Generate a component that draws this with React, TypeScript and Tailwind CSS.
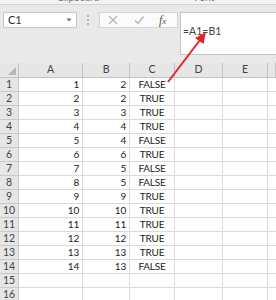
import React from "react";

const A = [1, 2, 3, 4, 5, 6, 7, 8, 9, 10, 11, 12, 13, 14];
const B = [2, 2, 3, 4, 4, 6, 5, 5, 9, 10, 11, 12, 13, 13];

export default function App() {
  const rows = Array.from({ length: 16 }, (_, i) => i);
  return (
    <div
      className="relative w-[276px] h-[300px] overflow-hidden bg-[#e9e9e9]"
      style={{ fontFamily: "Lato, 'Liberation Sans', sans-serif" }}
    >
      {/* ribbon bottom strip */}
      <div className="h-[5px] overflow-hidden bg-[#f3f3f3] border-b border-[#d4d4d4] flex text-[10px] leading-[10px] text-[#777]">
        <span className="ml-[57px] -mt-[8px]">Clipboard</span>
        <span className="ml-[95px] -mt-[8px]">Font</span>
      </div>

      {/* formula bar */}
      <div className="flex items-start pl-[3px] mt-[7px]">
        <div className="w-[74px] h-[16px] bg-white border border-[#c6c6c6] flex items-center justify-between px-[4px]">
          <span className="text-[11px] leading-[14px] text-[#333]">C1</span>
          <svg width="6" height="4" viewBox="0 0 6 4">
            <path d="M0.5 0.5 L5.5 0.5 L3 3.5 Z" fill="#6a6a6a" />
          </svg>
        </div>
        <div className="w-[22px] h-[16px] flex flex-col items-center justify-center gap-[2px]">
          <div className="w-[2px] h-[2px] bg-[#b5b5b5]" />
          <div className="w-[2px] h-[2px] bg-[#b5b5b5]" />
          <div className="w-[2px] h-[2px] bg-[#b5b5b5]" />
        </div>
        <div className="w-[79px] h-[16px] bg-[#fbfbfb] border border-[#d3d3d3] flex items-center">
          <svg width="10" height="10" viewBox="0 0 10 10" className="ml-[8px]">
            <path d="M1 1 L9 9 M9 1 L1 9" stroke="#b3b3b3" strokeWidth="1.1" />
          </svg>
          <svg width="10" height="10" viewBox="0 0 10 10" className="ml-[16px]">
            <path d="M1 5.5 L4 8.5 L9.5 1.5" stroke="#b3b3b3" strokeWidth="1.3" fill="none" />
          </svg>
          <span
            className="ml-[15px] italic text-[12px] leading-[12px] text-[#555]"
            style={{ fontFamily: "'Liberation Serif', serif" }}
          >
            f<span className="text-[9px]">x</span>
          </span>
        </div>
        <div className="ml-[2px] flex-1 h-[43px] bg-white border border-r-0 border-[#c6c6c6] pl-[2px] pt-[4px]">
          <span className="text-[10.5px] leading-[13px] text-[#444]">=A1=B1</span>
        </div>
      </div>

      {/* grid */}
      <div className="mt-[8px] grid grid-cols-[19px_64px_47px_45px_48px_45px_1fr] text-[10px] tracking-[-0.2px]">
        <div className="h-[15px] bg-[#e6e6e6] border-r border-b border-[#c3c3c3] flex items-end justify-end pr-[2px] pb-[2px]">
          <svg width="8" height="8" viewBox="0 0 8 8">
            <path d="M8 0 L8 8 L0 8 Z" fill="#b6b6b6" />
          </svg>
        </div>
        {["A", "B", "C", "D", "E", "F"].map((c) => (
          <div
            key={c}
            className="h-[15px] bg-[#e6e6e6] border-r border-b border-[#c3c3c3] flex items-center justify-center text-[#444] text-[10.5px]"
          >
            {c === "F" ? "" : c}
          </div>
        ))}
        {rows.map((i) => (
          <React.Fragment key={i}>
            <div className="h-[14px] bg-[#e6e6e6] border-r border-b border-[#c9c9c9] flex items-center justify-center text-[#444] text-[10.5px]">
              {i + 1}
            </div>
            <div className="h-[14px] bg-white border-r border-b border-[#dadada] flex items-center justify-end pr-[3px] text-[#222]">
              {i < 14 ? A[i] : ""}
            </div>
            <div className="h-[14px] bg-white border-r border-b border-[#dadada] flex items-center justify-end pr-[3px] text-[#222]">
              {i < 14 ? B[i] : ""}
            </div>
            <div className="h-[14px] bg-white border-r border-b border-[#dadada] flex items-center justify-center text-[#222]">
              {i < 14 ? (A[i] === B[i] ? "TRUE" : "FALSE") : ""}
            </div>
            <div className="h-[14px] bg-white border-r border-b border-[#dadada]" />
            <div className="h-[14px] bg-white border-r border-b border-[#dadada]" />
            <div className="h-[14px] bg-white border-b border-[#dadada]" />
          </React.Fragment>
        ))}
      </div>

      {/* red annotation arrow */}
      <svg
        className="absolute left-0 top-0 pointer-events-none"
        width="276"
        height="300"
        viewBox="0 0 276 300"
      >
        <line x1="168" y1="82" x2="200" y2="40" stroke="#e3242b" strokeWidth="2" />
        <polygon points="206,32 203.5,44 195,38" fill="#e3242b" />
      </svg>
    </div>
  );
}
